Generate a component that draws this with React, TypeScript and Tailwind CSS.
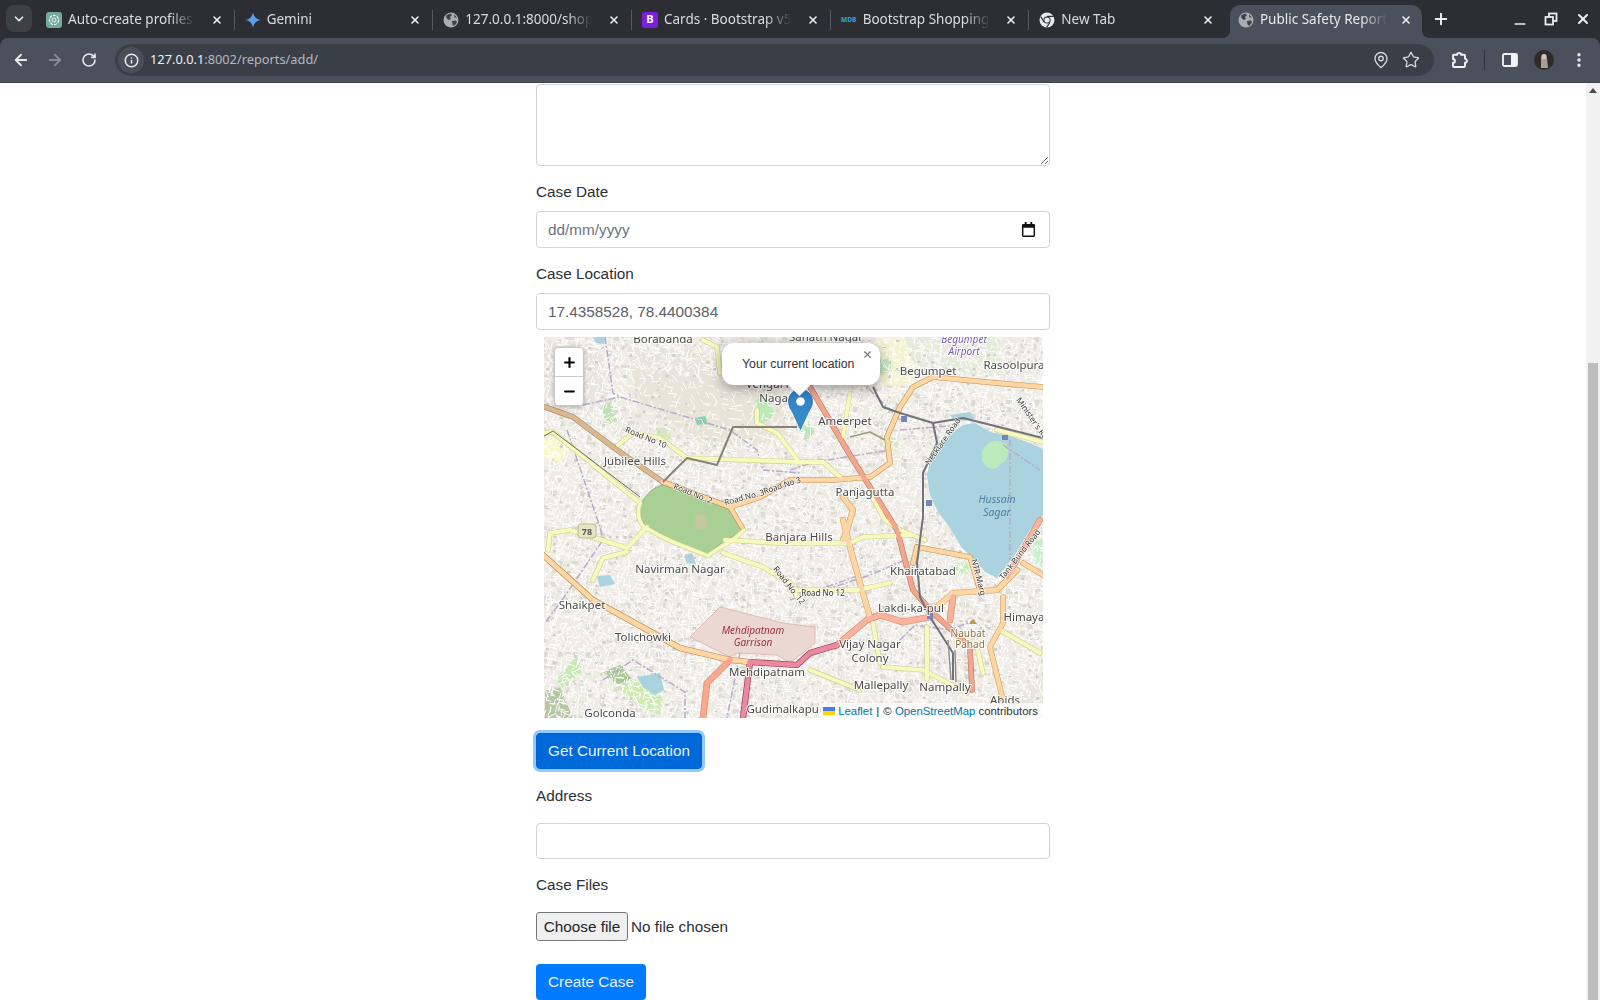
import React from 'react';
import { ArrowLeft, ArrowRight, RotateCw, Info, MapPin, Star, EllipsisVertical, Plus, X, ChevronDown, Minus } from 'lucide-react';

const Globe = () => (
  <svg viewBox="0 0 16 16" className="w-4 h-4 shrink-0">
    <circle cx="8" cy="8" r="7.5" fill="#a9adb3" />
    <path d="M3 3.5 L7 1.5 L9 3 L7 5 L8 7 L5.5 8 L3.5 6 Z M9 9 L13 8.5 L14 10.5 L11 14 L9.5 12.5 Z M11 2.5 L14 5.5 L11.5 5.5 Z" fill="#3d4148" />
  </svg>
);

const GptIcon = () => (
  <svg viewBox="0 0 16 16" className="w-4 h-4 shrink-0">
    <rect width="16" height="16" rx="3" fill="#74aa9c" />
    <circle cx="8" cy="8" r="4.6" fill="none" stroke="#e8f3f0" strokeWidth="1.2" strokeDasharray="3 1" />
    <circle cx="8" cy="8" r="2" fill="none" stroke="#e8f3f0" strokeWidth="1" />
  </svg>
);

const GeminiIcon = () => (
  <svg viewBox="0 0 16 16" className="w-4 h-4 shrink-0">
    <path d="M8 0 C8.6 4.6 11.4 7.4 16 8 C11.4 8.6 8.6 11.4 8 16 C7.4 11.4 4.6 8.6 0 8 C4.6 7.4 7.4 4.6 8 0 Z" fill="#5b9be8" />
  </svg>
);

const BootstrapIcon = () => (
  <div className="w-4 h-4 shrink-0 rounded-[3px] bg-[#7a1fe0] text-white text-[11px] font-bold flex items-center justify-center font-['Noto_Sans',sans-serif]">B</div>
);

const MdbIcon = () => (
  <div className="w-4 h-4 shrink-0 text-[#3fa0d8] text-[6.5px] font-bold flex items-center justify-center font-['Noto_Sans',sans-serif]">MDB</div>
);

const ChromeIcon = () => (
  <svg viewBox="0 0 16 16" className="w-4 h-4 shrink-0">
    <circle cx="8" cy="8" r="7.5" fill="#e8eaed" />
    <circle cx="8" cy="8" r="3.6" fill="#2c2e33" />
    <circle cx="8" cy="8" r="2.6" fill="#e8eaed" />
    <path d="M8 4.4 L14.6 4.4 M5 10 L1.8 4.6 M10.9 10.2 L7.6 15.4" stroke="#2c2e33" strokeWidth="1.1" />
  </svg>
);

const tabs = [
  { title: 'Auto-create profiles with a signal', icon: <GptIcon /> },
  { title: 'Gemini', icon: <GeminiIcon /> },
  { title: '127.0.0.1:8000/shop/cart', icon: <Globe /> },
  { title: 'Cards · Bootstrap v5.3', icon: <BootstrapIcon /> },
  { title: 'Bootstrap Shopping Cart', icon: <MdbIcon /> },
  { title: 'New Tab', icon: <ChromeIcon /> },
];

const TabStrip = () => (
  <div className="h-[38px] bg-[#2c2e33] flex items-end font-['Noto_Sans',sans-serif] text-[13.5px] text-[#d9dce0]">
    <div className="w-[26px] h-[27px] ml-[6px] mb-[6px] rounded-lg bg-[#3c4047] flex items-center justify-center">
      <ChevronDown className="w-[14px] h-[14px] text-[#e8eaed]" strokeWidth={3} />
    </div>
    <div className="flex ml-[6px]">
      {tabs.map((tab, i) => (
        <div key={i} className="w-[198.67px] h-[33px] pb-[4px] pl-2 flex items-center">
          {tab.icon}
          <span className="ml-[6px] w-[130px] whitespace-nowrap overflow-hidden [mask-image:linear-gradient(to_right,black_78%,transparent_98%)]">{tab.title}</span>
          <X className={`ml-auto w-3 h-3 text-[#eceef0] ${i === 5 ? 'mr-[2px]' : ''}`} strokeWidth={3.2} />
          <div className={`ml-[11px] mr-[2px] w-px h-[20px] ${i === 5 ? 'bg-transparent' : 'bg-[#55595f]'}`} />
        </div>
      ))}
      <div className="relative w-[192px] h-[33px] pb-[4px] pl-2 flex items-center bg-[#4a515c] rounded-t-[10px] text-[#e6e8eb]">
        <span className="absolute -left-2 bottom-0 w-2 h-2 bg-[radial-gradient(circle_at_0_0,transparent_8px,#4a515c_8px)]" />
        <span className="absolute -right-2 bottom-0 w-2 h-2 bg-[radial-gradient(circle_at_100%_0,transparent_8px,#4a515c_8px)]" />
        <Globe />
        <span className="ml-[6px] w-[130px] whitespace-nowrap overflow-hidden [mask-image:linear-gradient(to_right,black_78%,transparent_98%)]">Public Safety Report System</span>
        <X className="ml-auto mr-[10px] w-3 h-3 text-[#eceef0]" strokeWidth={3.2} />
      </div>
    </div>
    <Plus className="ml-[10px] mb-[10px] w-[18px] h-[18px] text-[#eceef0]" strokeWidth={2.6} />
    <Minus className="ml-[62px] mb-[6px] w-[16px] h-[16px] text-[#eceef0]" strokeWidth={2.6} />
    <svg viewBox="0 0 14 14" className="mb-[12px] w-[14px] h-[14px] ml-[16px]" fill="none" stroke="#eceef0" strokeWidth="1.8">
      <rect x="5" y="1.5" width="7.5" height="7.5" />
      <rect x="1.5" y="5" width="7.5" height="7.5" fill="#2c2e33" />
    </svg>
    <X className="ml-[17px] mb-[11px] w-[16px] h-[16px] text-[#eceef0]" strokeWidth={3} />
  </div>
);

const Toolbar = () => (
  <div className="h-[45px] bg-[#2c2e33]">
    <div className="h-full bg-[#4a515c] rounded-t-lg border-b border-[#3f444c] flex items-center pl-1 text-[#e8eaed]">
      <div className="w-[34px] flex justify-center"><ArrowLeft className="w-[18px] h-[18px]" strokeWidth={2.4} /></div>
      <div className="w-[34px] flex justify-center"><ArrowRight className="w-[18px] h-[18px] text-[#868c95]" strokeWidth={2.4} /></div>
      <div className="w-[34px] flex justify-center"><RotateCw className="w-4 h-4" strokeWidth={2.4} /></div>
      <div className="ml-[9px] w-[1319px] h-8 rounded-full bg-[#3a3f47] flex items-center">
        <div className="ml-[3px] w-[26px] h-[26px] rounded-full bg-[#4a505a] flex items-center justify-center">
          <Info className="w-[15px] h-[15px]" strokeWidth={2.4} />
        </div>
        <div className="ml-[6px] flex-1 text-[12.8px] font-['Noto_Sans',sans-serif] text-[#b4b8be]">
          <span className="text-[#eef0f2]">127.0.0.1</span>:8002/reports/add/
        </div>
        <MapPin className="w-[18px] h-[18px] text-[#d5d8dc]" strokeWidth={1.8} />
        <Star className="ml-3 mr-[14px] w-[18px] h-[18px] text-[#d5d8dc]" strokeWidth={1.8} />
      </div>
      <svg viewBox="0 0 18 18" className="ml-4 w-[18px] h-[18px]" fill="none" stroke="#f1f3f4" strokeWidth="1.9" strokeLinejoin="round">
        <path d="M3 8 V4.8 a1 1 0 0 1 1-1 h3.2 a1.9 1.9 0 0 1 3.8 0 H14 a1 1 0 0 1 1 1 v3 a1.9 1.9 0 0 1 0 3.8 V15 a1 1 0 0 1 -1 1 H4 a1 1 0 0 1 -1 -1 V11.8 a1.9 1.9 0 0 0 0-3.8 Z" />
      </svg>
      <div className="ml-4 w-px h-5 bg-[#2e3238]" />
      <svg viewBox="0 0 16 16" className="ml-[17px] w-4 h-4">
        <rect x="1" y="2" width="14" height="12" rx="1.5" fill="none" stroke="#f1f3f4" strokeWidth="1.8" />
        <rect x="9" y="2" width="6" height="12" fill="#f1f3f4" />
      </svg>
      <svg viewBox="0 0 20 20" className="ml-4 w-5 h-5">
        <circle cx="10" cy="10" r="10" fill="#2f2b28" />
        <path d="M7 18 L7 8 Q10 3 13 8 L14 18 Z" fill="#a89c96" />
        <circle cx="10" cy="6.5" r="2.6" fill="#d9c8bd" />
      </svg>
      <EllipsisVertical className="ml-4 w-[18px] h-[18px]" strokeWidth={2.6} />
    </div>
  </div>
);

// small seeded generator so the street noise of the map stays the same on each load
function mulberry(seed: number) {
  return () => {
    seed |= 0; seed = (seed + 0x6d2b79f5) | 0;
    let t = Math.imul(seed ^ (seed >>> 15), 1 | seed);
    t = (t + Math.imul(t ^ (t >>> 7), 61 | t)) ^ t;
    return ((t ^ (t >>> 14)) >>> 0) / 4294967296;
  };
}

function makeTexture() {
  const r = mulberry(4711);
  let white = '';
  let grey = '';
  let dark = '';
  for (let x = 544; x < 1043; x += 7) {
    for (let y = 337; y < 718; y += 7) {
      const quiet = x > 625 && x < 780 && y > 370 && y < 430;
      const a = Math.floor(r() * 3) * 0.9 + r() * 0.25;
      const n = quiet ? 1 : 3;
      for (let i = 0; i < n; i++) {
        const px = x + r() * 7;
        const py = y + r() * 7;
        const len = 3 + r() * 6;
        const ang = a + (i % 2 ? Math.PI / 2 : 0);
        white += `M${px.toFixed(1)} ${py.toFixed(1)}l${(Math.cos(ang) * len).toFixed(1)} ${(Math.sin(ang) * len).toFixed(1)}`;
      }
      if (r() > 0.6) {
        const w = 2 + r() * 5;
        const h = 2 + r() * 4;
        grey += `M${x} ${y}h${w.toFixed(1)}v${h.toFixed(1)}h${(-w).toFixed(1)}z`;
      }
      if (r() > 0.85) {
        dark += `M${x + 2} ${y + 3}h${(1 + r() * 3).toFixed(1)}v${(1 + r() * 2).toFixed(1)}h-3z`;
      }
    }
  }
  return { white, grey, dark };
}

const texture = makeTexture();

const areas: [string, string][] = [
  ['M625 345 L700 350 L780 395 L790 440 L710 450 L640 400 Z', '#e9e4da'],
  ['M545 340 L600 345 L612 400 L570 425 L545 405 Z', '#e8e5de'],
  ['M900 337 L1000 337 L1000 375 L920 372 Z', '#e6eadb'],
  ['M875 337 L905 337 L920 385 L880 385 Z', '#f3f3cf'],
  ['M1000 700 L1043 680 L1043 718 L1000 718 Z', '#e8e5de'],
  ['M544 440 L553 436 L570 450 L560 462 L544 458 Z', '#f8f7c8'],
  ['M557 677 L578 655 L582 672 L560 690 Z', '#c6e8b6'],
  ['M617 687 L637 680 L663 697 L660 715 L640 707 Z', '#cfeab0'],
  ['M603 672 L620 665 L633 680 L615 685 Z', '#a8c896'],
  ['M545 690 L560 688 L573 718 L545 718 Z', '#b4c8a4'],
  ['M1033 543 L1043 538 L1043 567 L1035 563 Z', '#c6f0c8'],
  ['M950 563 L967 563 L970 573 L955 575 Z', '#c8eeb8'],
  ['M878 360 L890 358 L892 372 L880 374 Z', '#c4ecc0'],
  ['M695 418 L705 416 L708 424 L697 425 Z', '#7fd6a8'],
  ['M755 400 L768 395 L775 415 L760 425 Z', '#bfe8b8'],
  ['M810 420 L815 432 L806 440 L800 430 Z', '#bfe8b8'],
  ['M600 405 L612 402 L618 420 L607 425 Z', '#bfe3b0'],
  ['M655 430 L668 428 L672 440 L658 440 Z', '#d6e8c0'],
  ['M880 440 L895 437 L900 450 L885 452 Z', '#d6e8c0'],
];

const waters = [
  'M927 475 L933 452 L945 438 L963 425 L975 423 L990 432 L1010 436 L1030 443 L1043 449 L1043 515 L1030 530 L1014 556 L997 578 L985 572 L975 560 L962 548 L948 525 L938 512 L930 495 Z',
  'M593 337 L606 337 L604 344 L596 343 Z',
  'M637 677 L660 673 L664 690 L655 695 L643 687 Z',
  'M597 576 L610 575 L615 584 L600 587 Z',
  'M684 556 L692 553 L696 564 L687 563 Z',
  'M950 415 L970 412 L975 419 L955 422 Z',
];

// [path, casing, fill, width]
const roads: [string, string, string, number][] = [
  ['M545 433 L553 432 L640 503', '#cfcf8f', '#f7fabf', 4],
  ['M550 533 L570 530 L627 548 L647 527', '#cfcf8f', '#f7fabf', 4],
  ['M550 533 L548 550 M593 580 L603 558 L627 552', '#cfcf8f', '#f7fabf', 4],
  ['M618 445 L633 433 L660 438 L687 458 L800 462 L823 462 L840 477', '#cfcf8f', '#f7fabf', 4],
  ['M703 340 L717 347 L720 373', '#cfcf8f', '#f7fabf', 4],
  ['M757 410 L757 423 L777 433 L800 463', '#cfcf8f', '#f7fabf', 4],
  ['M850 393 L843 437', '#d8d890', '#f7fabf', 3.5],
  ['M723 553 L763 567 L790 583 L797 597', '#cfcf8f', '#f7fabf', 4],
  ['M725 540 L777 543 L850 543 L863 537 L913 535', '#cfcf8f', '#f7fabf', 4],
  ['M790 590 L857 590 L890 583', '#cfcf8f', '#f7fabf', 4],
  ['M873 623 L880 663 M927 627 L927 680 M883 667 L923 670 L967 693 M810 670 L860 690', '#cfcf8f', '#f7fabf', 4],
  ['M1000 630 L1040 653 M977 647 L983 673 M997 430 L1043 442', '#cfcf8f', '#f7fabf', 4],
  ['M870 493 L885 520 L900 530 L925 540', '#cfcf8f', '#f7fabf', 4],
  ['M640 503 C636 515 640 528 650 530 C668 542 690 548 708 556 C716 548 730 545 744 530', '#cfcf8f', '#f7fabf', 3.5],
  ['M545 407 L573 417 L617 450 L663 482', '#a88e70', '#dcb890', 4.5],
  ['M663 482 L692 493 L730 507 L760 497 L790 480 L833 480 L870 477 L890 463 L887 437 L900 407 L913 387 L933 377 L985 382 L1043 387', '#c89050', '#fcd6a4', 4.5],
  ['M730 507 L742 527', '#c89050', '#fcd6a4', 4],
  ['M543 555 L593 600 L653 633 L680 648 L730 660 L750 662', '#b88040', '#fcd6a4', 5],
  ['M843 520 L850 547 L860 583 L870 617', '#d8a060', '#fcd6a4', 5],
  ['M843 497 L853 510 L847 530 L843 540', '#d8a060', '#fcd6a4', 5],
  ['M913 563 L917 547 L970 557 L980 590', '#c89050', '#fcd6a4', 4.5],
  ['M937 607 L953 593 L997 590 L1017 570', '#d8a060', '#fcd6a4', 5],
  ['M1003 597 L1003 623 L990 647 L1003 700 M1023 563 L1043 575', '#d8a060', '#fcd6a4', 4.5],
  ['M810 387 L850 455 L897 530 L913 590 L933 613 L970 647 L972 690', '#b87a60', '#f2a68e', 4.5],
  ['M837 645 L867 620 L880 615 L903 622 L930 617', '#d98a70', '#f9b29c', 5.5],
  ['M1007 577 L1040 520', '#d98a70', '#f9b29c', 5],
  ['M950 620 L953 597', '#d98a70', '#f9b29c', 5.5],
  ['M730 660 L707 683 L703 718', '#d98a70', '#f9a88e', 5.5],
  ['M750 662 L797 665 L810 653 L837 645', '#90304a', '#e98aa0', 5],
  ['M750 662 L743 718', '#90304a', '#e98aa0', 5],
];

const rails: [string, string, number][] = [
  ['M663 482 L687 458 L717 465 L733 427 L797 427', '#84847a', 2],
  ['M850 437 L870 432 L885 440', '#9a9a7a', 1.6],
  ['M873 387 L883 407 L900 413 L933 423 L937 443 L923 473 L923 517 L917 563 L920 597 L930 617 L953 653 L953 680', '#70727a', 2],
  ['M933 423 L963 418 L1003 428 L1043 438', '#70727a', 2],
  ['M948 640 L951 680 M955 650 L956 682', '#8a8c90', 1.4],
  ['M544 436 L553 431 L640 497', '#333333', 0.7],
];

const boundaries = [
  'M605 337 L613 393 L620 397 L730 430 L757 450 L763 470 L800 473',
  'M583 405 L620 397',
  'M567 430 L600 527 L603 540 L567 593 L545 623',
  'M603 680 L633 660 L685 692 L685 718',
  'M740 653 L727 718',
  'M825 590 L870 575 L905 560',
  'M790 600 L860 575',
  'M900 640 L915 625 L950 630 L975 620',
  'M1010 440 L1010 560',
  'M1003 445 L1040 470',
  'M900 430 L960 425',
  'M790 470 L815 462 L890 450',
  'M860 380 L900 420',
];

type Label = { x: number; y: number; t: string; size?: number; fill?: string; italic?: boolean; rot?: number; halo?: string };

const labels: Label[] = [
  { x: 663, y: 343, t: 'Borabanda' },
  { x: 826, y: 341, t: 'Sanath Nagar' },
  { x: 964, y: 343, t: 'Begumpet', size: 10, fill: '#7a5cb0', italic: true },
  { x: 964, y: 355, t: 'Airport', size: 10, fill: '#7a5cb0', italic: true },
  { x: 928, y: 375, t: 'Begumpet' },
  { x: 1014, y: 369, t: 'Rasoolpura' },
  { x: 776, y: 388, t: 'Vengal Rao' },
  { x: 776, y: 402, t: 'Nagar' },
  { x: 845, y: 425, t: 'Ameerpet' },
  { x: 635, y: 465, t: 'Jubilee Hills' },
  { x: 865, y: 496, t: 'Panjagutta' },
  { x: 997, y: 503, t: 'Hussain', size: 10.5, fill: '#4d7fa8', italic: true, halo: 'none' },
  { x: 997, y: 516, t: 'Sagar', size: 10.5, fill: '#4d7fa8', italic: true, halo: 'none' },
  { x: 799, y: 541, t: 'Banjara Hills' },
  { x: 680, y: 573, t: 'Navirman Nagar' },
  { x: 582, y: 609, t: 'Shaikpet' },
  { x: 643, y: 641, t: 'Tolichowki' },
  { x: 753, y: 634, t: 'Mehdipatnam', size: 10, fill: '#a03040', italic: true, halo: 'none' },
  { x: 753, y: 646, t: 'Garrison', size: 10, fill: '#a03040', italic: true, halo: 'none' },
  { x: 767, y: 676, t: 'Mehdipatnam' },
  { x: 610, y: 717, t: 'Golconda' },
  { x: 785, y: 713, t: 'Gudimalkapur' },
  { x: 923, y: 575, t: 'Khairatabad' },
  { x: 911, y: 612, t: 'Lakdi-ka-pul' },
  { x: 1026, y: 621, t: 'Himayat' },
  { x: 870, y: 648, t: 'Vijay Nagar' },
  { x: 870, y: 662, t: 'Colony' },
  { x: 968, y: 637, t: 'Naubat', size: 10, fill: '#8a7440' },
  { x: 970, y: 648, t: 'Pahad', size: 10, fill: '#8a7440' },
  { x: 881, y: 689, t: 'Mallepally' },
  { x: 945, y: 691, t: 'Nampally' },
  { x: 1005, y: 704, t: 'Abids' },
  { x: 645, y: 440, t: 'Road No 10', size: 8, rot: 22, fill: '#333' },
  { x: 692, y: 496, t: 'Road No. 2', size: 8, rot: 22, fill: '#333' },
  { x: 745, y: 500, t: 'Road No. 3', size: 8, rot: -15, fill: '#333' },
  { x: 783, y: 488, t: 'Road No 3', size: 8, rot: -18, fill: '#333' },
  { x: 823, y: 596, t: 'Road No 12', size: 8, rot: 0, fill: '#333' },
  { x: 787, y: 587, t: 'Road No. 12', size: 8, rot: 52, fill: '#333' },
  { x: 945, y: 443, t: 'Necklace Road', size: 8, rot: -55, fill: '#333' },
  { x: 1030, y: 420, t: "Minister's Rd", size: 8, rot: 55, fill: '#333' },
  { x: 976, y: 578, t: 'NTR Marg', size: 8, rot: 75, fill: '#333' },
  { x: 1022, y: 556, t: 'Tank Bund Road', size: 8, rot: -52, fill: '#333' },
];

const MapDrawing = () => (
  <svg viewBox="544 337 499 381" className="block w-full h-full bg-[#eeebe5] blur-[0.45px]">
    <path d={texture.grey} fill="#dedbd4" />
    {areas.map(([d, fill], i) => <path key={i} d={d} fill={fill} />)}
    <path d={texture.white} stroke="#ffffff" strokeWidth="1" fill="none" />
    <path d={texture.dark} fill="#d2cec7" />
    <path d="M640 507 C645 495 652 488 662 485 C680 488 710 498 730 507 C738 515 744 525 740 533 C728 538 716 545 710 555 C695 548 675 545 662 535 C650 532 638 522 640 507 Z" fill="#a9cf95" stroke="#8db878" />
    <path d="M690 637 L720 607 L783 623 L815 627 L815 643 L790 663 L777 655 L737 653 L730 657 Z" fill="#ecd8d2" stroke="#dcbcb4" />
    <path d="M695 516 L705 514 L708 528 L696 530 Z" fill="#c4c8a0" />
    {waters.map((d, i) => <path key={i} d={d} fill="#aad3df" />)}
    <path d="M982 460 C980 448 990 438 1002 442 C1012 445 1010 460 1000 464 C996 472 986 470 982 460 Z" fill="#bdeabd" />
    {boundaries.map((d, i) => <path key={i} d={d} fill="none" stroke="#bba9c8" strokeWidth="1.5" strokeDasharray="7 2 2 2" />)}
    {roads.map(([d, c, _f, w], i) => <path key={`c${i}`} d={d} fill="none" stroke={c} strokeWidth={w + 1.2} strokeLinejoin="round" strokeLinecap="round" />)}
    {roads.map(([d, _c, f, w], i) => <path key={`f${i}`} d={d} fill="none" stroke={f} strokeWidth={w} strokeLinejoin="round" strokeLinecap="round" />)}
    {rails.map(([d, c, w], i) => <path key={i} d={d} fill="none" stroke={c} strokeWidth={w} strokeLinejoin="round" />)}
    <path d="M901 416h6v6h-6z M1002 435h6v5h-6z M926 500h6v6h-6z M927 613h6v6h-6z" fill="#7586b8" />
    <path d="M969 624l4 -5l4 5z" fill="#c8963c" />
    <rect x="578" y="524" width="18" height="14" rx="3" fill="#e6e6c6" stroke="#b8b890" />
    <text x="587" y="535" fontSize="9" fontWeight="700" textAnchor="middle" fill="#555" fontFamily="Noto Sans, sans-serif">78</text>
    {labels.map((l, i) => (
      <text
        key={i}
        x={l.x}
        y={l.y}
        textAnchor="middle"
        fontFamily="Noto Sans, sans-serif"
        fontSize={l.size ?? 11.5}
        fontStyle={l.italic ? 'italic' : 'normal'}
        fill={l.fill ?? '#4a4a4a'}
        stroke={l.halo ?? '#ffffff'}
        strokeOpacity={0.85}
        strokeWidth={l.size && l.size < 9 ? 1.4 : 2}
        paintOrder="stroke"
        transform={l.rot ? `rotate(${l.rot} ${l.x} ${l.y})` : undefined}
      >
        {l.t}
      </text>
    ))}
  </svg>
);

const LeafletMap = () => (
  <div className="relative w-[499px] h-[381px] ml-2 mb-[15px] overflow-hidden font-['Liberation_Sans',Arial,sans-serif]">
    <MapDrawing />
    <div className="absolute left-[10px] top-[10px] w-[30px] rounded bg-white border border-[#c9c9c9] shadow-[0_1px_4px_rgba(0,0,0,0.3)] text-black font-bold">
      <div className="h-[29px] flex items-center justify-center border-b border-[#ccc]"><Plus className="w-[15px] h-[15px]" strokeWidth={3.4} /></div>
      <div className="h-[28px] flex items-center justify-center"><Minus className="w-[15px] h-[15px]" strokeWidth={3.4} /></div>
    </div>
    <svg viewBox="0 0 25 41" className="absolute left-[244px] top-[52px] w-[25px] h-[41px]">
      <defs>
        <linearGradient id="pin" x1="0" y1="0" x2="0" y2="1">
          <stop offset="0" stopColor="#2e81c3" />
          <stop offset="1" stopColor="#3a8fd0" />
        </linearGradient>
      </defs>
      <path d="M12.5 0.5 C5.5 0.5 0.5 5.8 0.5 12.5 C0.5 17 3 20.5 5 24 L12.5 40.5 L20 24 C22 20.5 24.5 17 24.5 12.5 C24.5 5.8 19.5 0.5 12.5 0.5 Z" fill="url(#pin)" stroke="#2a72ad" strokeWidth="0.8" />
      <circle cx="12.5" cy="12.5" r="4.3" fill="#ffffff" />
    </svg>
    <div className="absolute left-[178px] top-[6px] w-[158px] h-[42px] rounded-xl bg-white shadow-[0_3px_14px_rgba(0,0,0,0.4)] flex items-center pl-5 text-[12.3px] text-[#333]">
      Your current location
      <X className="absolute right-[7px] top-[6px] w-[11px] h-[11px] text-[#757575]" strokeWidth={2.4} />
      <span className="absolute left-[70px] -bottom-[8px] w-[15px] h-[15px] rotate-45 bg-white" />
    </div>
    <div className="absolute right-0 bottom-0 h-[15px] pl-1 pr-[5px] bg-white/80 flex items-center text-[11.4px] text-[#333] whitespace-nowrap">
      <svg viewBox="0 0 12 8" className="w-3 h-2 mr-[3px]">
        <rect width="12" height="4" fill="#4c7be1" />
        <rect y="4" width="12" height="4" fill="#ffd500" />
      </svg>
      <span className="text-[#0078a8]">Leaflet</span>
      <span className="mx-1">|</span>
      <span>©&nbsp;</span>
      <span className="text-[#0078a8]">OpenStreetMap</span>
      <span>&nbsp;contributors</span>
    </div>
  </div>
);

const fieldCls = "block w-full px-[11px] rounded border border-[#ced4da] bg-white text-[15.3px] text-[#5a6168] placeholder:text-[#6c757d] outline-none";

const ReportForm = () => (
  <div className="w-[514px] pt-px font-['Liberation_Sans',Arial,sans-serif] text-[15.3px] leading-6 text-[#2b3035]">
    <textarea className="block w-full h-[82px] mb-[14px] rounded border border-[#ced4da] resize-y outline-none" />
    <label className="block mb-[7px]">Case Date</label>
    <div className="relative mb-[14px]">
      <input className={`${fieldCls} h-[37px]`} placeholder="dd/mm/yyyy" readOnly />
      <svg viewBox="0 0 16 16" className="absolute right-[14px] top-[11px] w-[15px] h-[15px]">
        <path d="M4 0v2H2.5A1.5 1.5 0 0 0 1 3.5v11A1.5 1.5 0 0 0 2.5 16h11a1.5 1.5 0 0 0 1.5-1.5v-11A1.5 1.5 0 0 0 13.5 2H12V0h-2v2H6V0H4z M2.6 6h10.8v8.4H2.6z" fill="#111" fillRule="evenodd" />
      </svg>
    </div>
    <label className="block mb-[7px]">Case Location</label>
    <input className={`${fieldCls} h-[37px] mb-[7px]`} defaultValue="17.4358528, 78.4400384" />
    <LeafletMap />
    <button className="block w-[166px] h-[36px] mb-[15px] rounded bg-[#0069d9] border border-[#0062cc] text-[#e8f2ff] shadow-[0_0_0_3px_rgba(38,143,255,0.5)]">Get Current Location</button>
    <label className="block mb-[15px]">Address</label>
    <input className={`${fieldCls} h-[36px] mb-[14px]`} />
    <label className="block mb-[15px]">Case Files</label>
    <div className="flex items-center h-[29px] mb-[23px]">
      <button className="w-[92px] h-[29px] rounded-[3px] bg-[#efefef] border border-[#767676] text-[#212529]">Choose file</button>
      <span className="ml-[3px]">No file chosen</span>
    </div>
    <button className="block w-[110px] h-[36px] rounded bg-[#007bff] text-[#e8f2ff]">Create Case</button>
  </div>
);

const Scrollbar = () => (
  <div className="w-[14px] bg-[#f1f1f1] flex flex-col items-center pt-[5px]">
    <div className="w-0 h-0 border-x-[4px] border-x-transparent border-b-[5px] border-b-[#4a4a4a]" />
    <div className="mt-auto w-[10px] h-[637px] bg-[#bdbdbd]" />
  </div>
);

export default function App() {
  return (
    <div className="h-screen overflow-hidden flex flex-col bg-white">
      <TabStrip />
      <Toolbar />
      <div className="flex-1 min-h-0 flex">
        <div className="flex-1 flex justify-center overflow-hidden">
          <ReportForm />
        </div>
        <Scrollbar />
      </div>
    </div>
  );
}
